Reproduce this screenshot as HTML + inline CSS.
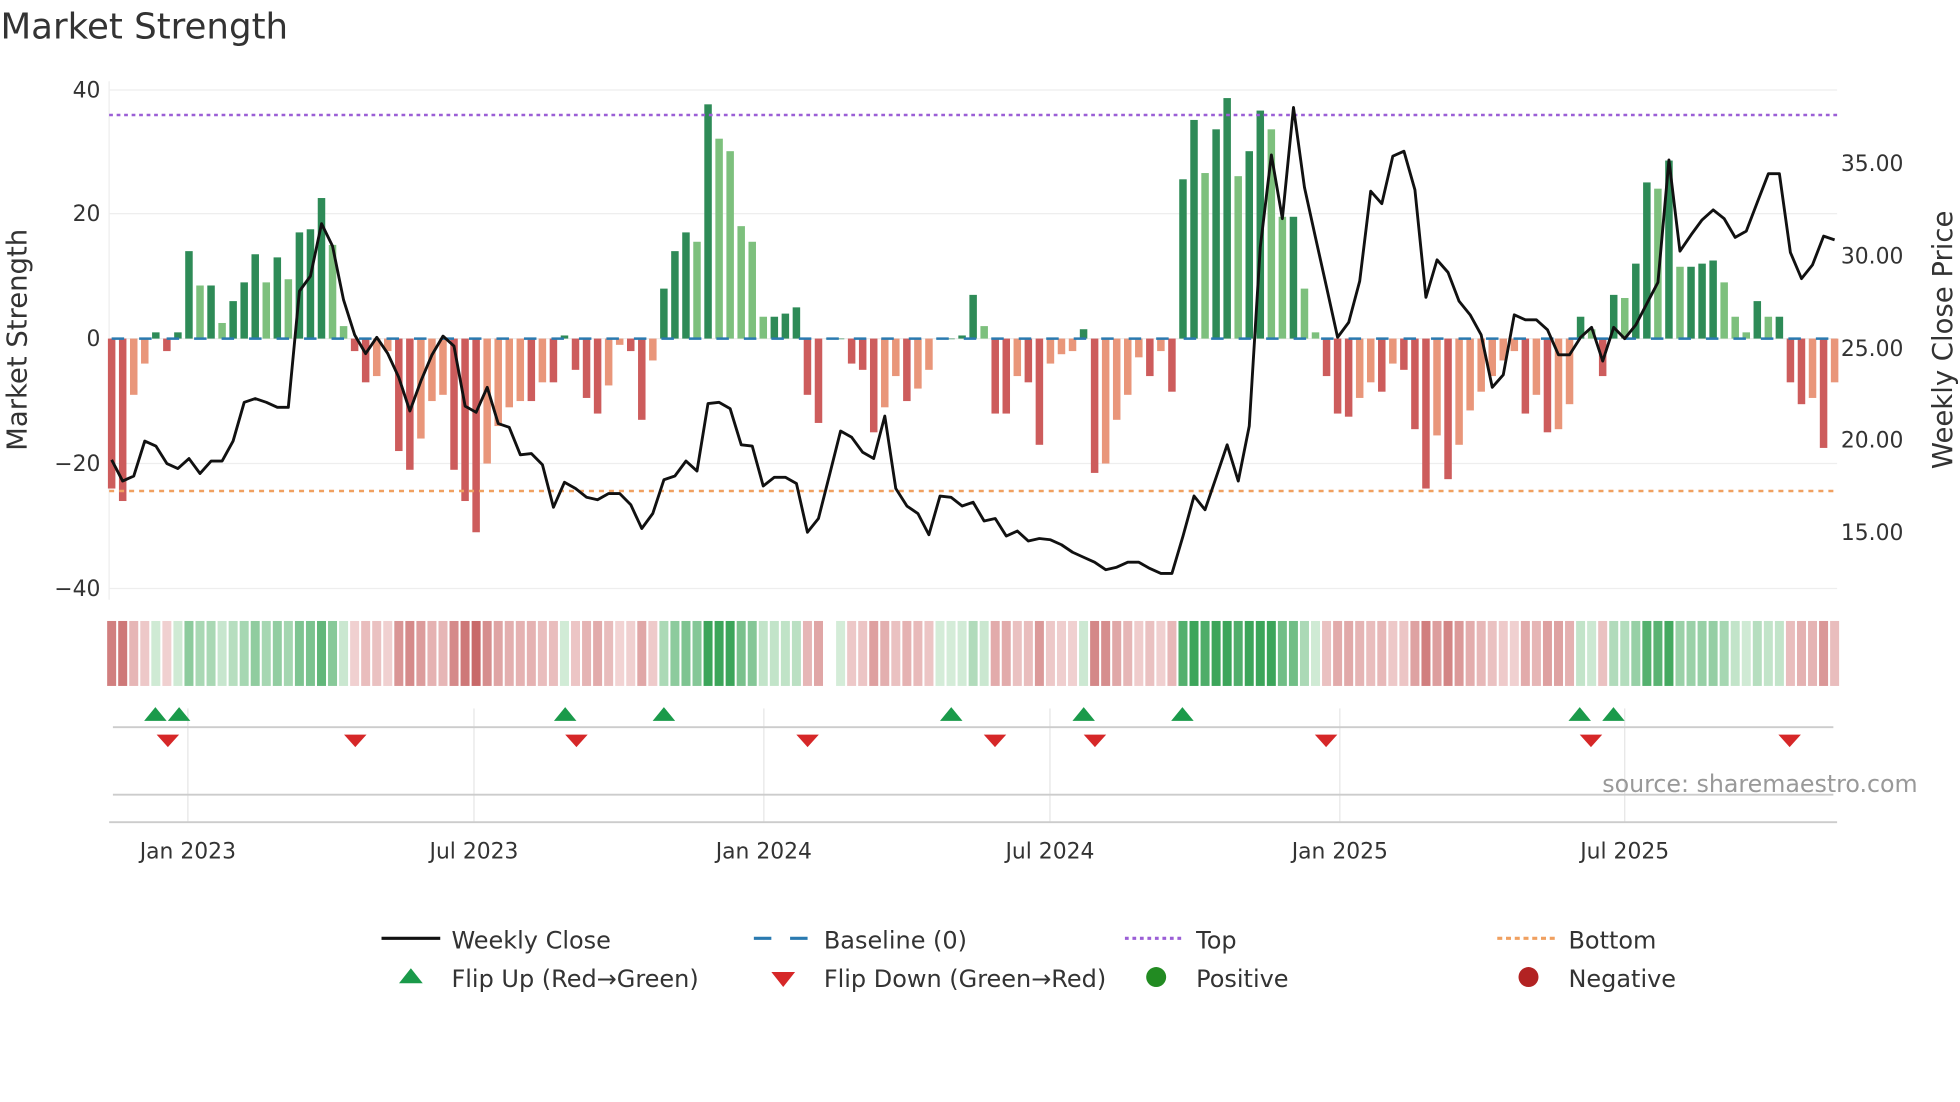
<!DOCTYPE html>
<html><head><meta charset="utf-8"><style>
html,body{margin:0;padding:0;background:#fff;width:1960px;height:1102px;overflow:hidden}
svg{display:block}
text{font-family:"DejaVu Sans","Liberation Sans",sans-serif;fill:#333}
</style></head><body>
<svg id="s" width="1960" height="1102" viewBox="0 0 1568 882" xmlns="http://www.w3.org/2000/svg">
<rect width="1568" height="882" fill="#fff"/>
<text x="0" y="31" font-size="28.5">Market Strength</text>
<g stroke="#eeeeee" stroke-width="1">
<line x1="87" x2="1470" y1="72" y2="72"/><line x1="87" x2="1470" y1="171" y2="171"/>
<line x1="87" x2="1470" y1="271" y2="271"/><line x1="87" x2="1470" y1="371" y2="371"/>
<line x1="87" x2="1470" y1="471" y2="471"/>
<line x1="87" x2="87" y1="65" y2="480"/>
</g>
<g font-size="17.5" text-anchor="end">
<text x="80" y="78">40</text><text x="80" y="177">20</text><text x="80" y="277">0</text>
<text x="80" y="377">−20</text><text x="80" y="477">−40</text>
</g>
<g font-size="17.5">
<text x="1473" y="137">35.00</text><text x="1473" y="211">30.00</text>
<text x="1473" y="285">25.00</text><text x="1473" y="358">20.00</text><text x="1473" y="432">15.00</text>
</g>
<text transform="translate(21,272) rotate(-90)" font-size="22" text-anchor="middle">Market Strength</text>
<text transform="translate(1562,272) rotate(-90)" font-size="22" text-anchor="middle">Weekly Close Price</text>
<g id="bars"></g>
<line x1="87" x2="1470" y1="92" y2="92" stroke="#9b5fd6" stroke-width="2" stroke-dasharray="3,3"/>
<line x1="87" x2="1470" y1="393" y2="393" stroke="#f0a060" stroke-width="2" stroke-dasharray="4,4"/>
<line x1="89" x2="1470" y1="271" y2="271" stroke="#2a7ab0" stroke-width="2" stroke-dasharray="10,12"/>
<polyline id="price" fill="none" stroke="#111" stroke-width="2.3" stroke-linejoin="round"/>
<g id="heat"></g>
<g stroke="#e6e6e6" stroke-width="1">
<line x1="150" x2="150" y1="567" y2="658"/><line x1="379" x2="379" y1="567" y2="658"/>
<line x1="611" x2="611" y1="567" y2="658"/><line x1="840" x2="840" y1="567" y2="658"/>
<line x1="1072" x2="1072" y1="567" y2="658"/><line x1="1300" x2="1300" y1="567" y2="658"/>
</g>
<line x1="90" x2="1467" y1="582" y2="582" stroke="#ccc" stroke-width="1.5"/>
<line x1="90" x2="1467" y1="636" y2="636" stroke="#ccc" stroke-width="1.5"/>
<line x1="87" x2="1470" y1="658" y2="658" stroke="#ccc" stroke-width="1.5"/>
<g id="flips"></g>
<text x="1282" y="634" font-size="19" style="fill:#999">source: sharemaestro.com</text>
<g font-size="17.5" text-anchor="middle">
<text x="150" y="687">Jan 2023</text><text x="379" y="687">Jul 2023</text><text x="611" y="687">Jan 2024</text>
<text x="840" y="687">Jul 2024</text><text x="1072" y="687">Jan 2025</text><text x="1300" y="687">Jul 2025</text>
</g>
<g font-size="19.2">
<line x1="305" x2="352" y1="751" y2="751" stroke="#111" stroke-width="2.5"/>
<text x="361" y="759">Weekly Close</text>
<line x1="603" x2="617" y1="751" y2="751" stroke="#2a7ab0" stroke-width="2.5"/>
<line x1="632" x2="646" y1="751" y2="751" stroke="#2a7ab0" stroke-width="2.5"/>
<text x="659" y="759">Baseline (0)</text>
<line x1="900" x2="946" y1="751" y2="751" stroke="#9b5fd6" stroke-width="2.5" stroke-dasharray="3,3"/>
<text x="957" y="759">Top</text>
<line x1="1198" x2="1244" y1="751" y2="751" stroke="#f0a060" stroke-width="2.5" stroke-dasharray="4,3"/>
<text x="1255" y="759">Bottom</text>
<polygon points="319,787 338,787 328.5,775" fill="#1a9a4a"/>
<text x="361" y="790">Flip Up (Red→Green)</text>
<polygon points="617,778 636,778 626.5,790" fill="#d62728"/>
<text x="659" y="790">Flip Down (Green→Red)</text>
<circle cx="925" cy="782" r="8" fill="#228b22"/>
<text x="957" y="790">Positive</text>
<circle cx="1223" cy="782" r="8" fill="#b22222"/>
<text x="1255" y="790">Negative</text>
</g>
</svg>
<script>
var V=[-24,-26,-9,-4,1,-2,1,14,8.5,8.5,2.5,6,9,13.5,9,13,9.5,17,17.5,22.5,15,2,-2,-7,-6,-2,-18,-21,-16,-10,-9,-21,-26,-31,-20,-14,-11,-10,-10,-7,-7,0.5,-5,-9.5,-12,-7.5,-1,-2,-13,-3.5,8,14,17,15.5,37.5,32,30,18,15.5,3.5,3.5,4,5,-9,-13.5,0,0,-4,-5,-15,-11,-6,-10,-8,-5,0,0,0.5,7,2,-12,-12,-6,-7,-17,-4,-2.5,-2,1.5,-21.5,-20,-13,-9,-3,-6,-2,-8.5,25.5,35,26.5,33.5,38.5,26,30,36.5,33.5,19.5,19.5,8,1,-6,-12,-12.5,-9.5,-7,-8.5,-4,-5,-14.5,-24,-15.5,-22.5,-17,-11.5,-8.5,-6,-3.5,-2,-12,-9,-15,-14.5,-10.5,3.5,1.5,-6,7,6.5,12,25,24,28.5,11.5,11.5,12,12.5,9,3.5,1,6,3.5,3.5,-7,-10.5,-9.5,-17.5,-7];
var P=[368,385,381,353,357,371,375,367,379,369,369,353,322,319,322,326,326,233,221,179,197,240,268,283,270,283,302,329,305,284,269,277,325,330,310,339,342,364,363,372,406,386,391,398,400,395,395,404,423,411,384,381,369,377,323,322,327,356,357,389,382,382,387,426,415,380,345,350,362,367,333,391,405,411,428,397,398,405,402,417,415,429,425,433,431,432,436,442,446,450,456,454,450,450,455,459,459,429,397,408,382,356,385,341,198,124,175,86,150,190,230,270,258,225,153,163,125,121,152,238,208,218,241,252,268,310,300,252,256,256,264,284,284,270,262,289,262,271,260,243,226,128,201,188,176,168,175,190,185,162,139,139,202,223,212,189,192];
var NS="http://www.w3.org/2000/svg";
function el(t,a,p){var e=document.createElementNS(NS,t);for(var k in a)e.setAttribute(k,a[k]);document.getElementById(p).appendChild(e);}
var step=(1468-89)/(V.length-1);
for(var i=0;i<V.length;i++){
 var x=89+i*step,v=V[i],pv=i?V[i-1]:0;
 var dark=Math.abs(v)>=Math.abs(pv)||(v*pv<0);
 var c=v>=0?(dark?"#2e8b57":"#7dc07d"):(dark?"#cd5c5c":"#e9967a");
 var h=Math.abs(v)*5;
 el("rect",{x:x-3,y:v>=0?271-h:271,width:6,height:Math.max(h,0.5),fill:c},"bars");
 if(x>657&&x<667)continue;
 var t=Math.min(1,Math.abs(v)/30);
 var hc;
 if(v>=0){var r=Math.round(212-(212-60)*t),g=Math.round(236-(236-165)*t),b=Math.round(216-(216-90)*t);hc="rgb("+r+","+g+","+b+")";}
 else{var r=Math.round(243-(243-200)*t),g=Math.round(215-(215-105)*t),b=Math.round(215-(215-105)*t);hc="rgb("+r+","+g+","+b+")";}
 el("rect",{x:x-3.6,y:497,width:7.2,height:52,fill:hc},"heat");
}
var pts=[];for(var i=0;i<P.length;i++)pts.push((89+i*step).toFixed(1)+","+P[i]);
document.getElementById("price").setAttribute("points",pts.join(" "));
[124,143,452,531,761,867,946,1264,1291].forEach(function(x){el("polygon",{points:(x-9)+",577 "+(x+9)+",577 "+x+",566",fill:"#1a9a4a"},"flips");});
[134,284,461,646,796,876,1061,1273,1432].forEach(function(x){el("polygon",{points:(x-9)+",588 "+(x+9)+",588 "+x+",598",fill:"#d62728"},"flips");});
</script>
</body></html>
